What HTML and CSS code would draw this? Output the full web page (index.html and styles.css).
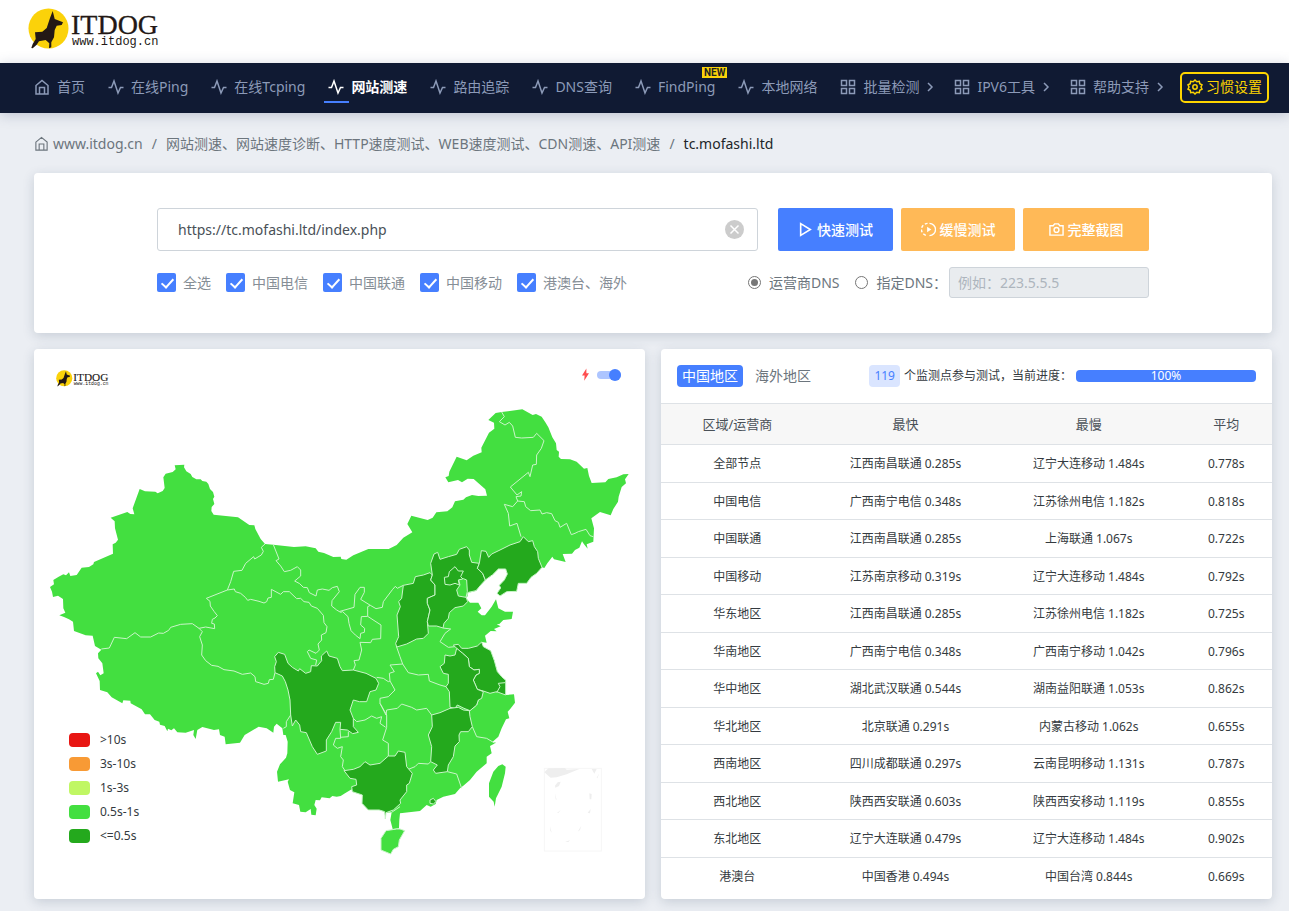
FILE: index.html
```html
<!DOCTYPE html>
<html lang="zh-CN">
<head>
    <meta charset="UTF-8">
    <meta name="viewport" content="width=device-width, initial-scale=1.0">
    <title>网站测速 - ITDOG</title>
    <link rel="stylesheet" href="styles.css">
</head>
<body>
    <!-- Shared icons -->
    <svg class="sprite" aria-hidden="true">
        <symbol id="i-home" viewBox="0 0 16 16"><path d="M2 6.5 8 1.5l6 5V15H2zM5.5 15V8.500h5V15" /></symbol>
        <symbol id="i-pulse" viewBox="0 0 16 16"><path d="M.5 8.500h3L6 2l4 12 2.500-5.500h3" /></symbol>
        <symbol id="i-grid" viewBox="0 0 16 16"><path d="M1.500 1.500h5v5h-5zM9.500 1.500h5v5h-5zM1.500 9.500h5v5h-5zM9.500 9.500h5v5h-5z" /></symbol>
        <symbol id="i-arrow" viewBox="0 0 8 10"><path d="M2 1l4 4-4 4" /></symbol>
        <symbol id="i-gear" viewBox="0 0 16 16"><path d="M8 1l1.800 1.700 2.500-.4.5 2.400 2.200 1.200L14 8l1 2.100-2.200 1.200-.5 2.400-2.500-.4L8 15l-1.800-1.700-2.500.4-.5-2.400L1 10.100 2 8 1 5.900l2.200-1.200.5-2.400 2.500.4z" /><circle cx="8" cy="8" r="2.200" /></symbol>
        <symbol id="i-play" viewBox="0 0 14 14"><path d="M2.500 1.500v11l9-5.500z" /></symbol>
        <symbol id="i-slow" viewBox="0 0 16 16"><path d="M9 1.500a6.500 6.500 0 0 1 0 13" /><path d="M7 1.500a6.500 6.500 0 0 0 0 13" stroke-dasharray="3 2" /><path d="M6.500 5v6l4.500-3z" fill="currentColor" stroke="none" /></symbol>
        <symbol id="i-camera" viewBox="0 0 16 16"><path d="M1 4h3.500L6 2h4l1.500 2H15v10H1z" /><circle cx="8" cy="8.500" r="2.600" /></symbol>
        <symbol id="logo" viewBox="0 0 144 42">
            <circle cx="20.500" cy="20.500" r="20" fill="#fbd20a" />
            <path d="M24.700 3l2 8 8.300 3.300-1.300 2.700-5 .7-2 4.300-.7 7.300-2.700 5v5l-2.300 1 .3-5-3.600-3.300-6.700 1.300-2.300 3.400-4 3.600-1.400-.3 1.400-4 3-5-.7-6.700 7.300-.6 4.400-3.700L22 10z" fill="#231815" />
            <text class="logo-name" x="43" y="26">ITDOG</text>
            <text class="logo-url" x="44" y="37">www.itdog.cn</text>
        </symbol>
    </svg>

    <header class="topbar">
        <a href="#" aria-label="ITDOG"><svg class="logo"><use href="#logo" /></svg></a>
    </header>

    <nav class="navbar">
        <a href="#"><svg class="icon"><use href="#i-home" /></svg>首页</a>
        <a href="#"><svg class="icon"><use href="#i-pulse" /></svg>在线Ping</a>
        <a href="#"><svg class="icon"><use href="#i-pulse" /></svg>在线Tcping</a>
        <a href="#" class="active"><svg class="icon"><use href="#i-pulse" /></svg>网站测速</a>
        <a href="#"><svg class="icon"><use href="#i-pulse" /></svg>路由追踪</a>
        <a href="#"><svg class="icon"><use href="#i-pulse" /></svg>DNS查询</a>
        <a href="#"><svg class="icon"><use href="#i-pulse" /></svg>FindPing<span class="new">NEW</span></a>
        <a href="#"><svg class="icon"><use href="#i-pulse" /></svg>本地网络</a>
        <a href="#"><svg class="icon"><use href="#i-grid" /></svg>批量检测<svg class="arrow"><use href="#i-arrow" /></svg></a>
        <a href="#"><svg class="icon"><use href="#i-grid" /></svg>IPV6工具<svg class="arrow"><use href="#i-arrow" /></svg></a>
        <a href="#"><svg class="icon"><use href="#i-grid" /></svg>帮助支持<svg class="arrow"><use href="#i-arrow" /></svg></a>
        <button class="settings"><svg class="icon"><use href="#i-gear" /></svg>习惯设置</button>
    </nav>

    <main class="page">
        <div class="breadcrumb">
            <a href="#"><svg class="icon"><use href="#i-home" /></svg>www.itdog.cn</a>
            <span>/</span>
            <a href="#">网站测速、网站速度诊断、HTTP速度测试、WEB速度测试、CDN测速、API测速</a>
            <span>/</span>
            <span class="current">tc.mofashi.ltd</span>
        </div>

        <form class="card search" onsubmit="return false">
            <div class="search-inner">
                <div class="row">
                    <div class="url-box">
                        <input type="text" id="url" aria-label="网址" value="https://tc.mofashi.ltd/index.php">
                        <button type="button" class="clear" aria-label="清空" onclick="document.getElementById('url').value=''"><svg viewBox="0 0 19 19"><path d="M5.500 5.500l8 8M13.500 5.500l-8 8" /></svg></button>
                    </div>
                    <div class="buttons">
                        <button class="btn fast"><svg class="icon"><use href="#i-play" /></svg>快速测试</button>
                        <button class="btn slow"><svg class="icon"><use href="#i-slow" /></svg>缓慢测试</button>
                        <button class="btn shot"><svg class="icon"><use href="#i-camera" /></svg>完整截图</button>
                    </div>
                </div>
                <div class="row options">
                    <div class="checks">
                        <label><input type="checkbox" checked>全选</label>
                        <label><input type="checkbox" checked>中国电信</label>
                        <label><input type="checkbox" checked>中国联通</label>
                        <label><input type="checkbox" checked>中国移动</label>
                        <label><input type="checkbox" checked>港澳台、海外</label>
                    </div>
                    <div class="dns">
                        <label><input type="radio" name="dns" checked>运营商DNS</label>
                        <div class="custom-dns">
                            <label><input type="radio" name="dns">指定DNS：</label>
                            <input type="text" class="dns-ip" aria-label="指定DNS" placeholder="例如：223.5.5.5" disabled>
                        </div>
                    </div>
                </div>
            </div>
        </form>

        <div class="panels">
            <section class="card map-card">
                <svg class="map" viewBox="0 -3 1833 1650" role="img" aria-label="中国地图">
                    <!-- Mainland -->
                    <path class="land" d="M48 711L60 703 58 690 74 680 88 673 96 676 105 667 109 678 128 675 143 653 165 651 178 643 180 636 237 611 236 583 245 578 252 569 243 535 242 514 230 503 280 486 289 492 301 493 296 475 317 417 333 424 364 425 371 430 386 423 392 414 388 382 395 371 416 366 425 358 422 346 451 344 450 352 457 364 470 372 475 381 487 388 500 388 505 393 517 395 523 402 528 417 537 426 541 440 537 447 541 462 533 471 532 483 539 494 612 502 646 525 661 526 664 537 680 567 693 582 718 584 780 591 815 589 845 595 853 605 870 609 898 621 920 620 922 627 937 629 958 616 1003 597 1064 597 1088 585 1108 563 1135 547 1120 522 1132 497 1181 510 1196 503 1207 487 1240 484 1255 472 1263 454 1288 449 1296 442 1314 435 1333 438 1359 437 1354 418 1319 387 1301 386 1284 397 1272 390 1243 397 1234 382 1244 378 1246 365 1268 320 1298 331 1318 317 1343 307 1342 293 1365 248 1381 236 1380 218 1363 210 1385 189 1403 186 1465 178 1496 195 1506 192 1523 200 1534 217 1543 232 1555 262 1566 280 1568 300 1575 305 1574 320 1581 327 1608 328 1628 335 1650 356 1660 354 1665 378 1673 399 1714 397 1723 387 1748 382 1768 373 1784 372 1773 388 1776 400 1763 411 1754 440 1752 455 1738 477 1730 496 1698 486 1672 505 1680 535 1678 575 1658 583 1661 596 1650 583 1644 574 1636 593 1623 600 1614 611 1586 612 1595 636 1560 628 1555 620 1540 640 1531 654 1524 652 1508 670 1491 682 1478 700 1453 700 1448 724 1418 725 1398 738 1389 730 1400 714 1396 706 1411 690 1420 672 1415 657 1393 657 1376 674 1354 690 1343 702 1326 722 1310 727 1303 727 1300 740 1296 744 1308 758 1333 758 1342 775 1331 785 1343 796 1353 796 1373 770 1386 748 1393 775 1413 785 1437 785 1433 807 1408 810 1396 822 1388 823 1400 829 1380 837 1388 844 1370 843 1353 857 1358 878 1343 876 1348 890 1370 902 1381 932 1390 965 1403 980 1415 991 1415 1035 1440 1033 1443 1058 1428 1078 1421 1085 1426 1105 1416 1108 1403 1135 1393 1160 1376 1175 1386 1178 1368 1188 1373 1210 1358 1220 1358 1240 1328 1265 1308 1290 1288 1307 1278 1315 1263 1332 1228 1340 1208 1350 1205 1362 1190 1370 1178 1365 1158 1383 1098 1390 1096 1410 1095 1435 1076 1437 1069 1410 1073 1387 1056 1388 1054 1407 1052 1385 1036 1380 1003 1380 984 1360 985 1335 955 1325 953 1318 933 1330 920 1338 908 1340 895 1338 887 1345 863 1342 858 1351 845 1350 841 1365 848 1376 845 1396 832 1394 830 1377 815 1387 799 1385 795 1365 776 1360 781 1327 768 1320 761 1295 765 1288 732 1295 729 1265 738 1243 756 1223 760 1210 761 1175 755 1155 748 1155 745 1135 728 1121 720 1130 718 1148 698 1135 674 1130 632 1155 618 1178 575 1183 572 1160 558 1155 555 1138 540 1140 505 1131 490 1140 485 1167 478 1155 480 1140 455 1148 430 1147 420 1135 412 1141 402 1136 400 1144 392 1128 378 1124 376 1115 362 1110 348 1093 333 1093 323 1078 290 1060 289 1052 268 1051 265 1060 233 1042 220 1027 198 1020 197 993 186 970 192 965 199 976 209 970 205 940 193 925 192 910 202 899 183 888 176 857 155 856 120 843 117 815 105 808 90 801 76 796 94 788 88 775 87 747 72 737 57 741 54 725z" />

                    <!-- North-west borders -->
                    <g class="border">
                        <path d="M693 582L682 592 688 604 682 615 662 627 659 620 635 640 624 661 599 664 590 695 580 720 517 745 528 754 529 768 540 784 550 797 543 804 535 808 533 820 541 822 542 836 515 831 495 835" />
                        <path d="M580 720L601 717 604 725 620 730 634 742 641 751 650 748 675 754 690 759 698 755 702 744 712 742 712 718 740 733 748 725 766 725 788 746 800 745 810 755 825 757 832 768 850 775 868 796 870 818 879 830 876 848 862 855 863 870 852 882 856 900 846 910 825 900 820 905 830 925 848 930 845 945" />
                        <path d="M202 897L226 894 241 862 278 866 303 848 320 861 350 861 374 849 388 850 404 841 410 832 440 823 475 821 495 835 505 845 497 860 505 885 503 915 515 932 533 946 552 949 570 959 600 963 625 973 650 969 663 980 665 995 675 998 690 1003 703 1000 706 989 718 988 723 968" />
                        <path d="M718 584L735 627 726 632 740 648 751 665 770 661 790 650 800 660 800 678 782 693 797 701 808 712 820 713 826 728 846 738 850 720 865 717 885 721 895 713 910 709 916 725 894 752 893 768 908 780 920 787 926 785 942 800 945 820 951 842 964 855 978 866 980 850 991 847 992 835 980 825 982 800 1001 799 1001 770 1009 766 980 748 991 727 991 712 978 712 963 733 960 772 918 784" />
                        <path d="M1009 766L1026 776 1045 772 1048 755 1076 718 1084 709 1090 715 1108 706M1001 799L1041 825 1040 866 1015 868 1010 878 978 877 983 900 975 930 960 932 964 945 958 960" />
                        <path d="M770 1095L757 1115 757 1130 748 1135" />
                    </g>

                    <!-- North-east -->
                    <g transform="translate(918 0)">
                        <path class="border" d="M485 186L493 200 478 215 495 225 508 217 518 228 526 262 545 264 580 262 590 250 612 272 604 295 590 315 589 343 578 345 570 380 565 367 511 411 531 435 545 425 543 438 528 440 533 453 553 455 557 470 572 482 600 480 606 492 620 488 635 491 645 512 655 517 660 532 680 520 694 554 705 550 715 545 738 538 750 557 760 560" />
                        <path class="border" d="M533 453L518 470 493 463 505 490 509 528 531 520 543 560" />
                        <path class="dark" d="M190 706L220 700 226 680 250 675 270 668 277 675 272 690 285 705 285 735 262 745 262 760 270 780 262 815 265 850 250 865 230 867 200 882 170 891 167 880 176 860 171 795 181 770 176 755 185 745z" />
                        <path class="dark" d="M277 675L272 640 282 612 293 607 300 628 325 620 350 613 358 598 380 590 388 600 388 615 395 637 418 640 412 655 428 670 436 690 425 702 408 722 385 727 378 740 383 755 370 768 345 773 328 788 325 805 312 820 309 834 290 828 265 828 262 815 270 780 262 760 262 745 285 735 285 705 272 690z" />
                        <path class="dark" d="M315 703L313 682 325 680 328 665 345 650 355 663 370 663 362 680 370 688 355 690 358 705 345 700 330 705z" />
                        <path class="light" d="M356 690L370 686 380 690 382 725 378 742 355 738 350 720 360 705z" />
                        <path class="dark" d="M418 640L424 602 438 604 446 622 455 612 480 600 510 585 540 575 550 560 565 575 578 572 583 590 593 605 595 625 606 652 590 670 573 682 560 700 535 700 530 724 500 725 480 738 471 730 482 714 478 706 493 690 502 672 497 657 475 657 458 674 436 690 428 670 412 655z" />
                    </g>

                    <!-- Sichuan -->
                    <path class="dark" d="M723 968L722 950 727 935 722 920 733 907 752 913 762 940 775 952 793 963 797 956 815 970 830 965 832 947 850 948 863 932 862 918 878 903 885 918 910 925 918 950 925 962 958 960 996 970 1026 985 1034 1000 1026 1020 1008 1025 998 1055 976 1055 958 1050 948 1080 958 1105 958 1130 973 1147 956 1151 940 1140 918 1138 920 1117 905 1117 893 1145 877 1170 877 1203 850 1213 835 1190 817 1148 800 1145 797 1125 785 1110 775 1128 770 1095 768 1050 762 1020 754 995 745 978z" />
                    <path class="border" d="M918 1138L920 1165 905 1165 898 1185 910 1195 925 1190 920 1220 928 1230 925 1250 933 1262" />

                    <!-- South-east -->
                    <g transform="translate(918 810)">
                        <path class="border" d="M309 24L332 27 315 40 300 65 325 82 345 80M170 81L180 110 188 132 205 158 235 165 265 163 268 183 300 195 318 200M188 132L150 135 163 155 148 160 150 183 165 210 145 230 120 235 120 250 138 285 140 270 172 265 185 252 215 262 230 270 260 265 275 285M110 172L130 175 145 185 150 183" />
                        <path class="border" d="M40 295L50 305 75 300 95 288 110 295 125 290 120 310 137 322M120 250L140 285 140 322 128 360 145 370 145 408M0 352L25 350 25 335M397 320L410 350 440 355 465 370M200 450L225 440 235 430 265 432 272 425M322 455L350 462 365 505M155 577L180 560M390 272L410 255 415 240 430 213" />
                        <path class="dark" d="M340 75L355 73 365 85 385 85 412 78 425 66 430 80 452 92 463 122 472 155 485 170 497 181 497 225 470 215 450 220 430 213 412 208 400 180 408 165 418 160 418 148 402 150 388 140 385 115 368 100 350 85z" />
                        <path class="dark" d="M350 85L345 105 330 108 315 105 313 130 300 140 310 160 325 163 325 190 318 200 328 215 330 262 345 265 352 255 372 265 390 272 410 255 415 240 425 235 430 215 412 208 400 180 408 165 418 160 418 148 402 150 388 140 385 115 368 100z" />
                        <path class="border" d="M495 188L475 190 480 200 470 218" />
                        <path class="dark" d="M275 285L300 278 330 265 355 262 370 270 388 272 390 290 397 320 385 335 362 335 357 345 358 365 345 378 340 410 325 435 322 455 287 460 280 450 292 435 272 425 275 380 265 345 277 320z" />
                        <path class="dark" d="M12 452L40 448 60 440 75 425 90 435 120 430 145 408 165 408 175 393 195 397 200 440 217 460 208 490 200 495 200 515 180 540 182 550 160 570 138 578 136 597 134 575 118 570 85 570 66 550 67 525 37 515 35 500 50 495 48 478 30 475z" />
                        <path class="dark" d="M270 540L280 535 288 545 280 552 270 550z" />
                        <path class="light" d="M138 632L170 627 180 627 194 632 178 660 175 680 160 688 152 702 123 690 123 655z" />
                        <path class="land" d="M487 433L497 440 495 460 485 500 468 535 464 560 461 545 447 530 447 490 460 455 475 438z" />
                        <!-- South China Sea inset -->
                        <g class="inset">
                            <rect x="613" y="445" width="171" height="248" />
                            <path d="M613 457L625 445 675 444 680 449 718 447 680 463 650 472 632 473zM645 497L653 487 662 485 657 498 646 503zM755 447L770 447 763 461zM770 473L778 460 772 475zM645 520L650 540 647 538zM748 520L755 522 754 538 749 538zM650 580L662 570 656 578zM743 578L752 567 750 580zM630 618L635 638 631 632zM713 635L724 617 720 630zM675 665L690 661 685 666z" />
                        </g>
                    </g>
                </svg>
                <svg class="map-logo"><use href="#logo" /></svg>
                <label class="switch" title="实时">
                    <svg viewBox="0 0 8 14"><path d="M5 0L0 8h3L2.500 14 8 5.500H5z" /></svg>
                    <input type="checkbox" aria-label="实时" checked>
                </label>
                <ul class="legend">
                    <li><i class="c1"></i>&gt;10s</li>
                    <li><i class="c2"></i>3s-10s</li>
                    <li><i class="c3"></i>1s-3s</li>
                    <li><i class="c4"></i>0.5s-1s</li>
                    <li><i class="c5"></i>&lt;=0.5s</li>
                </ul>
            </section>

            <section class="card result">
                <div class="result-head">
                    <button class="tab on">中国地区</button>
                    <button class="tab">海外地区</button>
                    <div class="status"><span class="count">119</span>个监测点参与测试，当前进度：</div>
                    <div class="progress">100%</div>
                </div>
                <table>
                    <thead>
                        <tr><th>区域/运营商</th><th>最快</th><th>最慢</th><th>平均</th></tr>
                    </thead>
                    <tbody>
                        <tr><td>全部节点</td><td>江西南昌联通 0.285s</td><td>辽宁大连移动 1.484s</td><td>0.778s</td></tr>
                        <tr><td>中国电信</td><td>广西南宁电信 0.348s</td><td>江苏徐州电信 1.182s</td><td>0.818s</td></tr>
                        <tr><td>中国联通</td><td>江西南昌联通 0.285s</td><td>上海联通 1.067s</td><td>0.722s</td></tr>
                        <tr><td>中国移动</td><td>江苏南京移动 0.319s</td><td>辽宁大连移动 1.484s</td><td>0.792s</td></tr>
                        <tr><td>华东地区</td><td>江西南昌联通 0.285s</td><td>江苏徐州电信 1.182s</td><td>0.725s</td></tr>
                        <tr><td>华南地区</td><td>广西南宁电信 0.348s</td><td>广西南宁移动 1.042s</td><td>0.796s</td></tr>
                        <tr><td>华中地区</td><td>湖北武汉联通 0.544s</td><td>湖南益阳联通 1.053s</td><td>0.862s</td></tr>
                        <tr><td>华北地区</td><td>北京联通 0.291s</td><td>内蒙古移动 1.062s</td><td>0.655s</td></tr>
                        <tr><td>西南地区</td><td>四川成都联通 0.297s</td><td>云南昆明移动 1.131s</td><td>0.787s</td></tr>
                        <tr><td>西北地区</td><td>陕西西安联通 0.603s</td><td>陕西西安移动 1.119s</td><td>0.855s</td></tr>
                        <tr><td>东北地区</td><td>辽宁大连联通 0.479s</td><td>辽宁大连移动 1.484s</td><td>0.902s</td></tr>
                        <tr><td>港澳台</td><td>中国香港 0.494s</td><td>中国台湾 0.844s</td><td>0.669s</td></tr>
                    </tbody>
                </table>
            </section>
        </div>
    </main>
</body>
</html>
```
FILE: styles.css
```css
* {
    box-sizing: border-box;
}
body {
    margin: 0;
    font-family: "Noto Sans", "Noto Sans CJK SC", sans-serif;
    font-size: 14px;
    line-height: 20px;
    color: #343a40;
    background-color: #ebeef3;
}
a {
    color: inherit;
    text-decoration: none;
}
button, input {
    font: inherit;
}
button {
    border: none;
    cursor: pointer;
}
.sprite {
    display: none;
}
.icon, .arrow {
    width: 16px;
    height: 16px;
    flex: none;
    fill: none;
    stroke: currentColor;
    stroke-width: 1.5;
}

/* Header */
.topbar {
    height: 63px;
    padding: 8px 28px;
    background-color: #fff;
}
.logo {
    display: block;
    width: 144px;
    height: 42px;
}
.logo-name {
    font-family: "Liberation Serif", serif;
    font-size: 28px;
    fill: #231815;
    stroke: #231815;
    stroke-width: 0.3;
}
.logo-url {
    font-family: "Liberation Mono", monospace;
    font-size: 12px;
    fill: #231815;
}
.navbar {
    display: flex;
    align-items: center;
    gap: 15px;
    height: 50px;
    padding: 0 20px 2px 30px;
    white-space: nowrap;
    color: #8c9ab8;
    background-color: #101a33;
    box-shadow: 0 2px 12px rgba(60, 70, 110, 0.25);
}
.navbar a {
    position: relative;
    display: flex;
    align-items: center;
    gap: 7px;
    height: 32px;
    padding: 0 4px;
}
.navbar .arrow {
    width: 8px;
    height: 10px;
    margin-right: -3px;
}
.navbar .active {
    color: #fff;
    font-weight: 600;
}
.active::after {
    content: "";
    position: absolute;
    left: 0;
    bottom: 0;
    width: 25px;
    height: 2px;
    background-color: #467fff;
}
.new {
    position: absolute;
    top: -4px;
    right: -8px;
    padding: 0 2px;
    font-family: Roboto, sans-serif;
    font-size: 10px;
    font-weight: 700;
    line-height: 11px;
    color: #222;
    background-color: #fbd20a;
}
.settings {
    display: flex;
    align-items: center;
    justify-content: center;
    gap: 3px;
    width: 90px;
    height: 31px;
    margin-left: auto;
    padding: 0;
    color: #fdd400;
    background: none;
    border: 2px solid #fdd400;
    border-radius: 5px;
}

/* Page */
.page {
    padding: 20px 17px 12px 34px;
}
.breadcrumb {
    display: flex;
    gap: 9px;
    height: 40px;
    padding-top: 1px;
    color: #6c757d;
}
.breadcrumb a {
    display: flex;
    gap: 4px;
}
.breadcrumb .icon {
    width: 15px;
    height: 15px;
    margin-top: 2px;
    stroke-width: 1.2;
}
.breadcrumb .current {
    color: #212529;
}
.card {
    background-color: #fff;
    border-radius: 4px;
    box-shadow: 0 3px 12px rgba(40, 60, 90, 0.18);
}

/* Search form */
.search {
    height: 160px;
    padding-top: 35px;
}
.search-inner {
    max-width: 992px;
    margin: 0 auto;
}
.row {
    display: flex;
    gap: 20px;
}
.url-box {
    position: relative;
    flex: 1;
}
.url-box input {
    width: 100%;
    height: 43px;
    padding: 0 50px 0 20px;
    color: #495057;
    border: 1px solid #ced4da;
    border-radius: 3px;
}
.clear {
    position: absolute;
    top: 12px;
    right: 14px;
    width: 19px;
    height: 19px;
    padding: 0;
    border-radius: 50%;
    background-color: #ccc;
}
.clear svg {
    display: block;
    stroke: #fff;
    stroke-width: 1.5;
}
.buttons {
    display: flex;
    gap: 8px;
}
.btn {
    display: flex;
    align-items: center;
    justify-content: center;
    gap: 4px;
    width: 114px;
    height: 43px;
    font-weight: 500;
    color: #fff;
    background-color: #ffb957;
    border-radius: 2px;
}
.btn .icon {
    width: 15px;
    height: 15px;
}
.fast {
    width: 115px;
    background-color: #467fff;
}
.shot {
    width: 126px;
}
.options {
    justify-content: space-between;
    margin-top: 16px;
}
.checks, .dns, .custom-dns, .options label {
    display: flex;
    align-items: center;
}
.checks {
    gap: 15px;
    color: #868e96;
}
.checks label {
    gap: 7px;
}
.checks input {
    position: relative;
    appearance: none;
    width: 19px;
    height: 19px;
    margin: 0;
    border-radius: 2px;
    background-color: #dee2e6;
}
.checks input:checked {
    background-color: #467fff;
}
.checks input:checked::after {
    content: "";
    position: absolute;
    left: 7px;
    top: 3px;
    width: 5px;
    height: 10px;
    border: solid #fff;
    border-width: 0 2px 2px 0;
    transform: rotate(42deg);
}
.dns {
    gap: 16px;
    color: #6c757d;
}
.custom-dns {
    gap: 2px;
}
.dns label {
    gap: 8px;
}
.dns input[type="radio"] {
    appearance: none;
    width: 13px;
    height: 13px;
    margin: 0;
    border: 1px solid #767676;
    border-radius: 50%;
}
.dns input[type="radio"]:checked {
    background: #767676 content-box;
    padding: 2px;
}
.dns-ip {
    width: 200px;
    height: 31px;
    padding: 0 8px;
    background-color: #e9ecef;
    border: 1px solid #ced4da;
    border-radius: 3px;
}
.dns-ip::placeholder {
    color: #adb5bd;
}

/* Map and results */
.panels {
    display: grid;
    grid-template-columns: 1fr 1fr;
    gap: 16px;
    margin-top: 16px;
}
.map-card {
    position: relative;
}
.map {
    display: block;
    width: 100%;
}
.land, .light {
    fill: #43df40;
}
.dark {
    fill: #24a91d;
}
.border, .dark, .light {
    stroke: #c9f5c8;
    stroke-width: 3;
    stroke-linejoin: round;
}
.border {
    fill: none;
}
.inset rect {
    fill: none;
    stroke: #f6f6f6;
    stroke-width: 3;
}
.inset path {
    fill: #eee;
}
.map-logo {
    position: absolute;
    top: 21px;
    left: 22px;
    width: 58px;
    height: 17px;
}
.switch {
    position: absolute;
    top: 19px;
    right: 24px;
    display: flex;
    align-items: center;
    gap: 8px;
}
.switch svg {
    width: 7px;
    height: 13px;
    fill: #ff4d4f;
}
.switch input {
    position: relative;
    appearance: none;
    width: 24px;
    height: 8px;
    margin: 0;
    border-radius: 4px;
    background-color: #adc5ff;
}
.switch input::after {
    content: "";
    position: absolute;
    top: -2px;
    right: 0;
    width: 12px;
    height: 12px;
    border-radius: 50%;
    background-color: #467fff;
}
.legend {
    position: absolute;
    left: 35px;
    bottom: 51px;
    margin: 0;
    padding: 0;
    list-style: none;
    font-size: 12px;
    line-height: 24px;
}
.legend li {
    display: flex;
    align-items: center;
    gap: 10px;
}
.legend i {
    width: 21px;
    height: 14px;
    border-radius: 4px;
}
.c1 { background-color: #e81613; }
.c2 { background-color: #f89a35; }
.c3 { background-color: #c0f763; }
.c4 { background-color: #43df40; }
.c5 { background-color: #24a91d; }
.result-head {
    display: flex;
    align-items: center;
    height: 54px;
    padding: 0 16px;
}
.tab {
    height: 22px;
    margin-right: 7px;
    padding: 0 5px;
    color: #6c757d;
    background: none;
    border-radius: 4px;
}
.tab.on {
    color: #fff;
    background-color: #467fff;
}
.status {
    margin: 0 4px 0 auto;
    font-size: 12px;
    white-space: nowrap;
}
.count {
    display: inline-block;
    margin-right: 4px;
    padding: 1px 5px;
    border-radius: 4px;
    color: #467fff;
    background-color: #dae5ff;
}
.progress {
    width: 180px;
    height: 12px;
    font-size: 12px;
    line-height: 12px;
    text-align: center;
    color: #fff;
    background-color: #467fff;
    border-radius: 4px;
}
table {
    width: 100%;
    height: 491px;
    table-layout: fixed;
    border-collapse: collapse;
    font-size: 12px;
    text-align: center;
}
th, td {
    width: 30%;
    padding: 0;
    border-top: 1px solid #dee2e6;
}
td {
    padding-top: 2px;
}
th {
    height: 41px;
    font-size: 13px;
    font-weight: 400;
    color: #495057;
    background-color: #f7f7f7;
}
th:first-child {
    width: 25%;
}
th:last-child {
    width: 15%;
}
```
